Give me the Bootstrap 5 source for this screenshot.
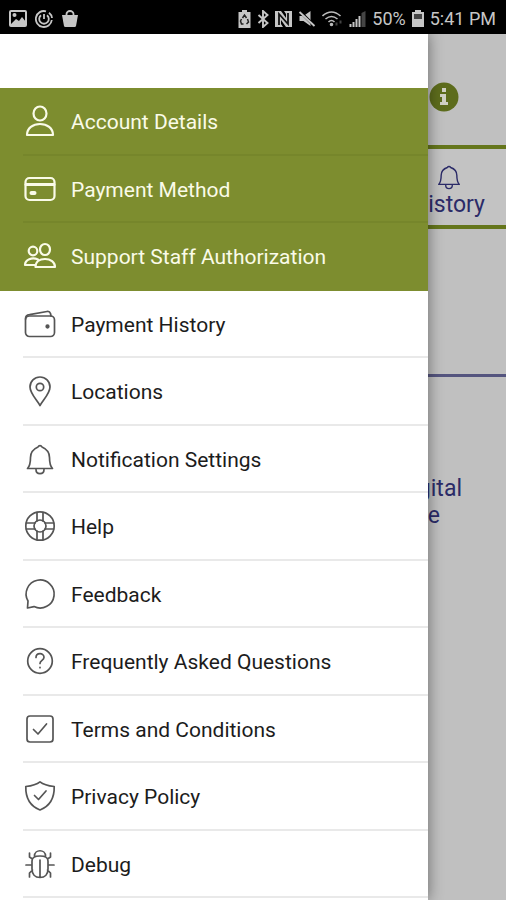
<!DOCTYPE html>
<html lang="en">
<head>
<meta charset="utf-8">
<meta name="viewport" content="width=device-width, initial-scale=1">
<title>Account menu</title>
<link href="https://cdn.jsdelivr.net/npm/bootstrap@5.3.0/dist/css/bootstrap.min.css" rel="stylesheet">
<style>
body{font-family:Roboto,"Liberation Sans",sans-serif;font-size:21px;line-height:26px;color:#1c1c1c;background:#c0c0c0}
.status-bar{height:34px;background:#000;color:#c6c6c6;font-size:18px;line-height:20px;padding:3px 10px 0 9px}
.status-bar svg{display:block;flex:none}
.status-icons{gap:6px}
.drawer{width:calc(100% - 78px);background:#fff;box-shadow:0 0 14px rgba(0,0,0,.45)}
.drawer-top{height:54px}
.menu-item{height:68px;padding-left:23px}
.menu-item:nth-child(even){height:67px}
.menu-item a{color:#1c1c1c;border-bottom:2px solid #e9e9e9;gap:14px}
.menu-item span{padding-top:2px}
.menu-item svg{width:34px;height:34px;stroke:#555;flex:none}
.menu-item.accent{background:#7d8d2f}
.menu-item.accent a{color:#fafbe8;border-color:#76862b}
.menu-item.accent svg{stroke:#fafbe8;stroke-width:2.2}
.menu-item.accent.last-accent a{border-color:#7d8d2f}
.menu-item svg,.line-icon{fill:none;stroke-width:1.7;stroke-linecap:round;stroke-linejoin:round}
.line-icon{stroke:#2b2b68}
.page-head{height:111px;padding:15px 47px 0 0}
.info-btn{width:30px;height:30px}
.tab-strip{height:84px;border-top:4px solid #65761c;border-bottom:4px solid #65761c;background:#c3c3c3;padding:14px 21px 0 0}
.tab-link,.digital{color:#2b2b68;font-size:23px;line-height:27px}
.tab-link .line-icon{margin-right:22px}
.panel-area{height:148px;border-bottom:3px solid #55557f}
.digital{padding:98px 44px 0 0}
.digital-tail{margin-right:22px}
</style>
<script src="https://cdn.jsdelivr.net/npm/bootstrap@5.3.0/dist/js/bootstrap.bundle.min.js"></script>
</head>
<body class="vh-100 d-flex flex-column overflow-hidden">
<header class="status-bar d-flex align-items-center justify-content-between">
  <div class="d-flex align-items-center gap-2">
    <svg width="18" height="18" viewBox="0 0 18 18"><rect x="1" y="1" width="16" height="15" rx="1" fill="none" stroke="#c6c6c6" stroke-width="2"/><path d="M2 14l5-5 3 2 3-4 4 5v3H2z" fill="#c6c6c6"/><circle cx="5.500" cy="5" r="2" fill="#c6c6c6"/></svg>
    <svg width="18" height="18" viewBox="0 0 18 18" fill="none" stroke="#c6c6c6" stroke-width="1.800"><path d="M11 1.300A8 8 0 1 0 16.800 10M14 2.800A8 8 0 0 1 17 8"/><path d="M6 5.200a4.800 4.800 0 1 0 6 0M9 4v5"/></svg>
    <svg width="18" height="18" viewBox="0 0 18 18"><path d="M1 5h16l-2 11q-.3 1-1.300 1H4.300Q3.300 17 3 16z" fill="#c6c6c6"/><path d="M5.500 7V4a3.500 3 0 0 1 7 0v3" fill="none" stroke="#c6c6c6" stroke-width="1.800"/></svg>
  </div>
  <div class="status-icons d-flex align-items-center">
    <svg width="13" height="18" viewBox="0 0 12 18"><path d="M0 2h3.500V0h5v2H12v16H0z" fill="#c6c6c6"/><path d="M4 8l2-3 2 3M9 9l1 3-2 2M5 14H3l-1-3 1-2" fill="none" stroke="#222" stroke-width="1.500"/></svg>
    <svg width="12" height="18" viewBox="0 0 11 18" fill="none" stroke="#c6c6c6" stroke-width="1.900"><path d="M1 5l9 8-4.500 4V1L10 5l-9 8"/></svg>
    <svg width="17" height="18" viewBox="0 0 17 18"><path d="M0 1h6l5 7V4L9 1h8v16h-6L6 10v4l2 3H0z" fill="#c6c6c6"/><path d="M4 15V4l9 10V3" fill="none" stroke="#111" stroke-width="1.800"/></svg>
    <svg width="18" height="18" viewBox="0 0 17 18"><path d="M1 6h4l7-5v15l-7-5H1z" fill="#c6c6c6"/><path d="M0 0l17 17" stroke="#000" stroke-width="3"/><path d="M1 2l15 14" stroke="#c6c6c6" stroke-width="1.900"/></svg>
    <svg width="21" height="18" viewBox="0 0 20 18" fill="none" stroke="#bbb" stroke-width="1.600"><path d="M0 6q9-8 18 0"/><path d="M3 9q6-5 12 0" /><path d="M6 12q3-3 6 0"/><circle cx="9" cy="14.500" r="1" fill="#bbb"/><path d="M13 14h2M17 12h2" stroke="#444" stroke-width="3"/></svg>
    <svg width="17" height="18" viewBox="0 0 16 18"><path d="M0 17v-3h2v3zM3 17v-5h2v5zM6 17V9h2v8zM9 17V6h2v11z" fill="#c6c6c6"/><path d="M12 17V3l4-2v16z" fill="#444"/></svg>
    <span>50%</span>
    <svg width="12" height="18" viewBox="0 0 12 18"><path d="M0 2h3V0h6v2h3v15H0z" fill="#c6c6c6"/><path d="M2 4h8v5H2z" fill="#444"/></svg>
    <span class="text-nowrap">5:41 PM</span>
  </div>
</header>
<div class="position-relative flex-grow-1 overflow-hidden">
  <main>
    <div class="page-head d-flex justify-content-end align-items-center">
      <button class="info-btn btn p-0 border-0 d-flex" type="button" aria-label="Information"><svg width="30" height="30" viewBox="0 0 30 30"><circle cx="15" cy="15" r="14.500" fill="#5d6c1c"/><path d="M13 6h4v4h-4zM11 12h6v8h2v3h-8v-3h2v-5h-2z" fill="#d0d0c4"/></svg></button>
    </div>
    <nav class="tab-strip d-flex justify-content-end">
      <a class="tab-link text-decoration-none d-flex flex-column align-items-end" href="#history"><svg class="line-icon" width="28" height="28" viewBox="0 0 34 34"><path d="M4.500 26c2-2 3-5 3-11 0-5 3-8 7.500-9.500a2.200 2.200 0 0 1 4 0c4.500 1.500 7.500 4.500 7.500 9.500 0 6 1 9 3 11zM13 27c0 5.500 8 5.500 8 0"/></svg><span>History</span></a>
    </nav>
    <div class="panel-area"></div>
    <div class="digital d-flex flex-column align-items-end"><span>Digital</span><span class="digital-tail">e</span></div>
  </main>
  <aside class="drawer position-absolute top-0 start-0 h-100">
    <div class="drawer-top"></div>
    <ul class="list-unstyled m-0">
      <li class="menu-item accent"><a href="#account" class="d-flex align-items-center h-100 text-decoration-none"><svg viewBox="0 0 34 34"><ellipse cx="17" cy="9.500" rx="6.500" ry="7"/><path d="M4 31c0-7 6-11 13-11s13 4 13 11z"/></svg><span>Account Details</span></a></li>
      <li class="menu-item accent"><a href="#method" class="d-flex align-items-center h-100 text-decoration-none"><svg viewBox="0 0 34 34"><rect x="2.500" y="6" width="29" height="22" rx="4"/><path d="M3 12.500h28" stroke-width="3"/><path d="M8.500 21h3" stroke-width="4"/></svg><span>Payment Method</span></a></li>
      <li class="menu-item accent last-accent"><a href="#staff" class="d-flex align-items-center h-100 text-decoration-none"><svg viewBox="0 0 34 34"><circle cx="10" cy="12" r="4.300"/><ellipse cx="22" cy="10.500" rx="5" ry="5.500"/><path d="M12.500 28c0-5 4-8 9.500-8s10 3 10 8zM15 20.500C9 18 2 20.500 2 26h10"/></svg><span>Support Staff Authorization</span></a></li>
      <li class="menu-item"><a href="#history" class="d-flex align-items-center h-100 text-decoration-none"><svg viewBox="0 0 34 34"><rect x="2.500" y="9" width="29" height="20.500" rx="4"/><path d="M2.500 12c0-3 1.500-4 4-4.300L24 4.500c2-.3 3 .5 3.500 2L28 9"/><circle cx="24.500" cy="19.500" r="1.300" fill="#555"/></svg><span>Payment History</span></a></li>
      <li class="menu-item"><a href="#locations" class="d-flex align-items-center h-100 text-decoration-none"><svg viewBox="0 0 34 34"><path d="M17 31.500C13 25 7 19 7 13a10 10 0 0 1 20 0c0 6-6 12-10 18.500z"/><circle cx="17" cy="13" r="3.700"/></svg><span>Locations</span></a></li>
      <li class="menu-item"><a href="#notifications" class="d-flex align-items-center h-100 text-decoration-none"><svg viewBox="0 0 34 34"><path d="M4.500 26.500c2-2 3-5 3-11 0-5 3-8.500 7.500-10.500a2.200 2.200 0 0 1 4 0c4.500 2 7.500 5.500 7.500 10.500 0 6 1 9 3 11zM13 27.500c0 5.500 8 5.500 8 0"/></svg><span>Notification Settings</span></a></li>
      <li class="menu-item"><a href="#help" class="d-flex align-items-center h-100 text-decoration-none"><svg viewBox="0 0 34 34"><circle cx="17" cy="17" r="14.200"/><circle cx="17" cy="17" r="6"/><path d="M14 3.500v8.500M20 3.500v8.500M14 22v8.500M20 22v8.500M3.500 14H12M3.500 20H12M22 14h8.500M22 20h8.500"/></svg><span>Help</span></a></li>
      <li class="menu-item"><a href="#feedback" class="d-flex align-items-center h-100 text-decoration-none"><svg viewBox="0 0 34 34"><path d="M4.500 31l.5-7A14 14 0 1 1 11 29.600z"/></svg><span>Feedback</span></a></li>
      <li class="menu-item"><a href="#faq" class="d-flex align-items-center h-100 text-decoration-none"><svg viewBox="0 0 34 34"><circle cx="17" cy="17" r="12.300"/><path d="M13 13.500c0-5 8-5 8-.3 0 3.300-4 3-4 6.300M17 23.300v.4"/></svg><span>Frequently Asked Questions</span></a></li>
      <li class="menu-item"><a href="#terms" class="d-flex align-items-center h-100 text-decoration-none"><svg viewBox="0 0 34 34"><rect x="4" y="4" width="26" height="26" rx="3"/><path d="M10.500 17.500l4.500 4.500 8.500-10"/></svg><span>Terms and Conditions</span></a></li>
      <li class="menu-item"><a href="#privacy" class="d-flex align-items-center h-100 text-decoration-none"><svg viewBox="0 0 34 34"><path d="M17 2.800C13 6 7 7 2.800 7.500 2.500 19 7 27 17 31c10-4 14.500-12 14.200-23.500C27 7 21 6 17 2.800z"/><path d="M11.500 16.500l4 4 7.500-8.500"/></svg><span>Privacy Policy</span></a></li>
      <li class="menu-item"><a href="#debug" class="d-flex align-items-center h-100 text-decoration-none"><svg viewBox="0 0 34 34"><path d="M9 14c0-4 3-5 8-5s8 1 8 5v8c0 5-3 8.500-8 8.500S9 27 9 22zM11.500 9c0-7 11-7 11 0M17 13v17M9 18H3M25 18h6M9.500 12L6.500 10V6M24.500 12l3-2V6M9.500 23l-3 3v4M24.500 23l3 3v4"/></svg><span>Debug</span></a></li>
    </ul>
  </aside>
</div>
</body>
</html>
